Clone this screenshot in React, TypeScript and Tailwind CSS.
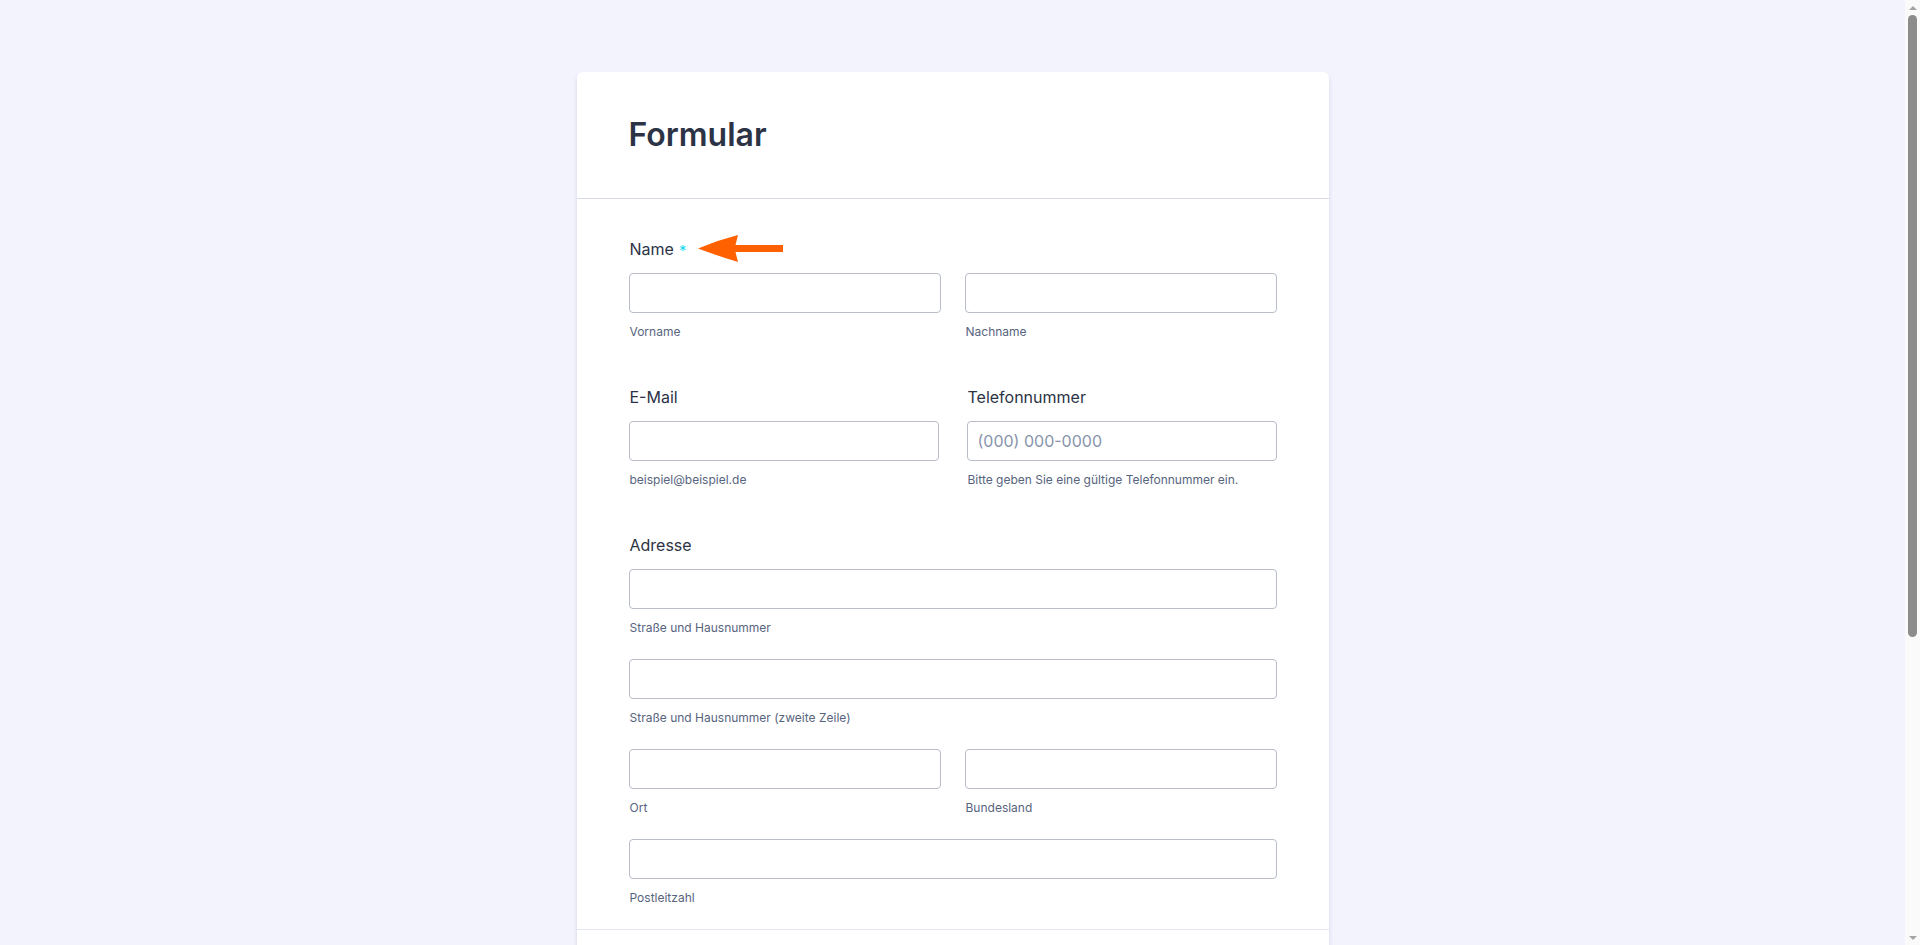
import clsx from "clsx";

function Arrow() {
  return (
    <svg width="86" height="28" viewBox="0 0 86 28" className="ml-[12px] -mt-[1px]">
      <path
        d="M0 13.5 Q20 5 40 0 L37.5 10 L85 10 L85 17 L37.5 17 L40 27 Q20 21 0 13.5 Z"
        fill="#ff6100"
      />
    </svg>
  );
}

function Label({ text, required }: { text: string; required?: boolean }) {
  return (
    <div className="flex items-center h-[24px] mb-[12px]">
      <span className="text-[16px] leading-[24px] font-normal text-[#2c3345] pl-[1px]">
        {text}
      </span>
      {required && (
        <>
          <span className="ml-[5px] mt-[2px] text-[15px] leading-none text-[#1ad8f0]">*</span>
          <Arrow />
        </>
      )}
    </div>
  );
}

function Input({ sub, placeholder, last }: { sub: string; placeholder?: string; last?: boolean }) {
  return (
    <div className={clsx("flex flex-col", !last && "mb-[22px]")}>
      <input
        placeholder={placeholder}
        className="h-[40px] w-full rounded-[4px] border border-[#b8bdc9] bg-white px-[10px] text-[16px] text-[#2c3345] placeholder:text-[#8894ab] outline-none"
      />
      <span className="mt-[10px] text-[12px] leading-[18px] text-[#57647e] pl-[1px]">{sub}</span>
    </div>
  );
}

function Scrollbar() {
  return (
    <div className="w-[15px] shrink-0 h-full bg-[#fafafa] flex flex-col items-center">
      <div className="h-[15px] flex items-center justify-center">
        <div className="w-0 h-0 border-l-[4px] border-r-[4px] border-b-[4px] border-l-transparent border-r-transparent border-b-[#a3a3a3]" />
      </div>
      <div className="w-[9px] h-[622px] rounded-full bg-[#8c8c8c]" />
      <div className="flex-1" />
      <div className="h-[15px] flex items-center justify-center">
        <div className="w-0 h-0 border-l-[4px] border-r-[4px] border-t-[4px] border-l-transparent border-r-transparent border-t-[#a3a3a3]" />
      </div>
    </div>
  );
}

export default function App() {
  return (
    <div className="h-screen flex bg-[#f3f3fe] font-['Inter',sans-serif] overflow-hidden">
      <div className="flex-1 overflow-hidden">
        <div className="pt-[72px] pb-[60px]">
          <div className="w-[752px] mx-auto bg-white rounded-t-[6px] shadow-[0_4px_4px_rgba(87,100,126,0.21)]">
            <div className="px-[52px] py-[43px] border-b border-[#d8dae9]">
              <h1 className="text-[32px] leading-[40px] font-semibold text-[#2c3345]">Formular</h1>
            </div>

            <div className="px-[52px] pt-[38px] pb-[22px] flex flex-col gap-[44px]">
              <div>
                <Label text="Name" required />
                <div className="grid grid-cols-2 gap-[24px]">
                  <Input sub="Vorname" last />
                  <Input sub="Nachname" last />
                </div>
              </div>

              <div className="grid grid-cols-2 gap-[28px]">
                <div>
                  <Label text="E-Mail" />
                  <Input sub="beispiel@beispiel.de" last />
                </div>
                <div>
                  <Label text="Telefonnummer" />
                  <Input
                    sub="Bitte geben Sie eine gültige Telefonnummer ein."
                    placeholder="(000) 000-0000"
                    last
                  />
                </div>
              </div>

              <div>
                <Label text="Adresse" />
                <Input sub="Straße und Hausnummer" />
                <Input sub="Straße und Hausnummer (zweite Zeile)" />
                <div className="grid grid-cols-2 gap-[24px]">
                  <Input sub="Ort" />
                  <Input sub="Bundesland" />
                </div>
                <Input sub="Postleitzahl" last />
              </div>
            </div>

            <div className="border-t border-[#e3e5f0] h-[120px]" />
          </div>
        </div>
      </div>
      <Scrollbar />
    </div>
  );
}
